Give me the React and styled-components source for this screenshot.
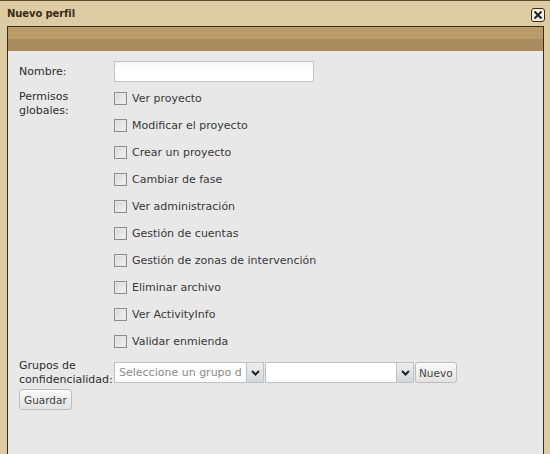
import React from "react";
import styled, { createGlobalStyle } from "styled-components";

const Global = createGlobalStyle`
  html, body { margin: 0; padding: 0; }
  body { width: 550px; height: 454px; overflow: hidden; background: #dccba3; }
  #root { height: 454px; }
`;

const Window = styled.div`
  box-sizing: border-box;
  width: 550px;
  height: 454px;
  background: #dccba3;
  border-top: 1px solid #5a4a30;
  display: flex;
  flex-direction: column;
  font-family: "DejaVu Sans", Verdana, sans-serif;
`;

const TitleBar = styled.div`
  height: 25px;
  display: flex;
  align-items: center;
  justify-content: space-between;
  padding: 0 5px 0 7px;
`;

const Title = styled.span`
  font-weight: bold;
  font-size: 10px;
  color: #3a2c14;
  letter-spacing: -0.1px;
`;

const CloseBtn = styled.span`
  box-sizing: border-box;
  width: 14px;
  height: 14px;
  margin-top: 2px;
  border: 1px solid #3a2c14;
  border-radius: 3px;
  background: #f6f1e6;
  display: flex;
  align-items: center;
  justify-content: center;
`;

const Panel = styled.div`
  flex: 1;
  margin: 0 6px 0 7px;
  border: 1px solid #3b2e1a;
  border-bottom: none;
  background: #e8e8e8;
  display: flex;
  flex-direction: column;
`;

const Band = styled.div`
  height: 24px;
  background: linear-gradient(#ba9c6a 0 48%, #a88b5f 52% 100%);
`;

const Form = styled.div`
  padding: 10px 11px;
  display: grid;
  grid-template-columns: 95px 1fr;
  font-size: 11px;
  color: #2e2e2e;
`;

const Label = styled.div`
  line-height: 14px;
  height: ${(p) => (p.$top ? "auto" : "21px")};
  display: flex;
  align-items: ${(p) => (p.$top ? "flex-start" : "center")};
  padding-top: ${(p) => (p.$top ? "5px" : "0")};
  margin-top: ${(p) => p.$mt || 0}px;
`;

const Field = styled.div`
  margin-top: ${(p) => p.$mt || 0}px;
  display: flex;
  align-items: center;
`;

const TextInput = styled.div`
  box-sizing: border-box;
  width: 200px;
  height: 21px;
  border: 1px solid #c4c4c4;
  background: linear-gradient(#f6f6f6, #ffffff 40%);
`;

const Checks = styled.div`
  display: flex;
  flex-direction: column;
`;

const CheckRow = styled.div`
  height: 27px;
  display: flex;
  align-items: center;
  gap: 5px;
  font-size: 11px;
  color: #383838;
`;

const Box = styled.span`
  box-sizing: border-box;
  width: 13px;
  height: 13px;
  border: 1px solid #8e8e8e;
  background: linear-gradient(135deg, #d8d8d8, #f4f4f4);
  box-shadow: inset 0 0 0 1px #e6e6e6;
`;

const Combo = styled.div`
  box-sizing: border-box;
  width: ${(p) => p.$w}px;
  height: 21px;
  border: 1px solid #c2c2c2;
  background: #fff;
  display: flex;
  align-items: stretch;
  margin-right: 1px;
`;

const ComboInput = styled.input`
  flex: 1;
  min-width: 0;
  border: none;
  outline: none;
  background: transparent;
  padding: 0 4px;
  margin: 0;
  font-family: "DejaVu Sans", Verdana, sans-serif;
  font-size: 11px;
  color: #333;
  &::placeholder { color: #8a8a8a; opacity: 1; }
`;

const Arrow = styled.span`
  width: 16px;
  border-left: 1px solid #c2c2c2;
  background: linear-gradient(#eeeeee, #d4d6d8);
  display: flex;
  align-items: center;
  justify-content: center;
`;

const Button = styled.span`
  box-sizing: border-box;
  height: 21px;
  padding: 0 ${(p) => p.$px || 5}px;
  border: 1px solid #bdbdbd;
  border-radius: 3px;
  background: linear-gradient(#fafafa, #e2e2e2);
  color: #444;
  font-size: 10.5px;
  display: inline-flex;
  align-items: center;
`;

const ButtonRow = styled.div`
  grid-column: 1 / 3;
  margin-top: 6px;
`;

const Chevron = () => (
  <svg width="9" height="6" viewBox="0 0 9 6">
    <path d="M1 1 L4.5 4.5 L8 1" fill="none" stroke="#222" strokeWidth="2" />
  </svg>
);

const perms = [
  "Ver proyecto",
  "Modificar el proyecto",
  "Crear un proyecto",
  "Cambiar de fase",
  "Ver administración",
  "Gestión de cuentas",
  "Gestión de zonas de intervención",
  "Eliminar archivo",
  "Ver ActivityInfo",
  "Validar enmienda",
];

export default function App() {
  return (
    <>
      <Global />
      <Window>
        <TitleBar>
          <Title>Nuevo perfil</Title>
          <CloseBtn>
            <svg width="10" height="10" viewBox="0 0 10 10">
              <path d="M1.5 1.5 L8.5 8.5 M8.5 1.5 L1.5 8.5" stroke="#222" strokeWidth="2" />
            </svg>
          </CloseBtn>
        </TitleBar>
        <Panel>
          <Band />
          <Form>
            <Label>Nombre:</Label>
            <Field>
              <TextInput />
            </Field>
            <Label $top $mt={3}>
              Permisos
              <br />
              globales:
            </Label>
            <Field $mt={3}>
              <Checks>
                {perms.map((p) => (
                  <CheckRow key={p}>
                    <Box />
                    {p}
                  </CheckRow>
                ))}
              </Checks>
            </Field>
            <Label $mt={7}>
              <span>
                Grupos de
                <br />
                confidencialidad:
              </span>
            </Label>
            <Field $mt={7}>
              <Combo $w={150}>
                <ComboInput placeholder="Seleccione un grupo de confidencialidad" readOnly />
                <Arrow>
                  <Chevron />
                </Arrow>
              </Combo>
              <Combo $w={149}>
                <ComboInput readOnly />
                <Arrow>
                  <Chevron />
                </Arrow>
              </Combo>
              <Button $px={3}>Nuevo</Button>
            </Field>
            <ButtonRow>
              <Button $px={4}>Guardar</Button>
            </ButtonRow>
          </Form>
        </Panel>
      </Window>
    </>
  );
}
